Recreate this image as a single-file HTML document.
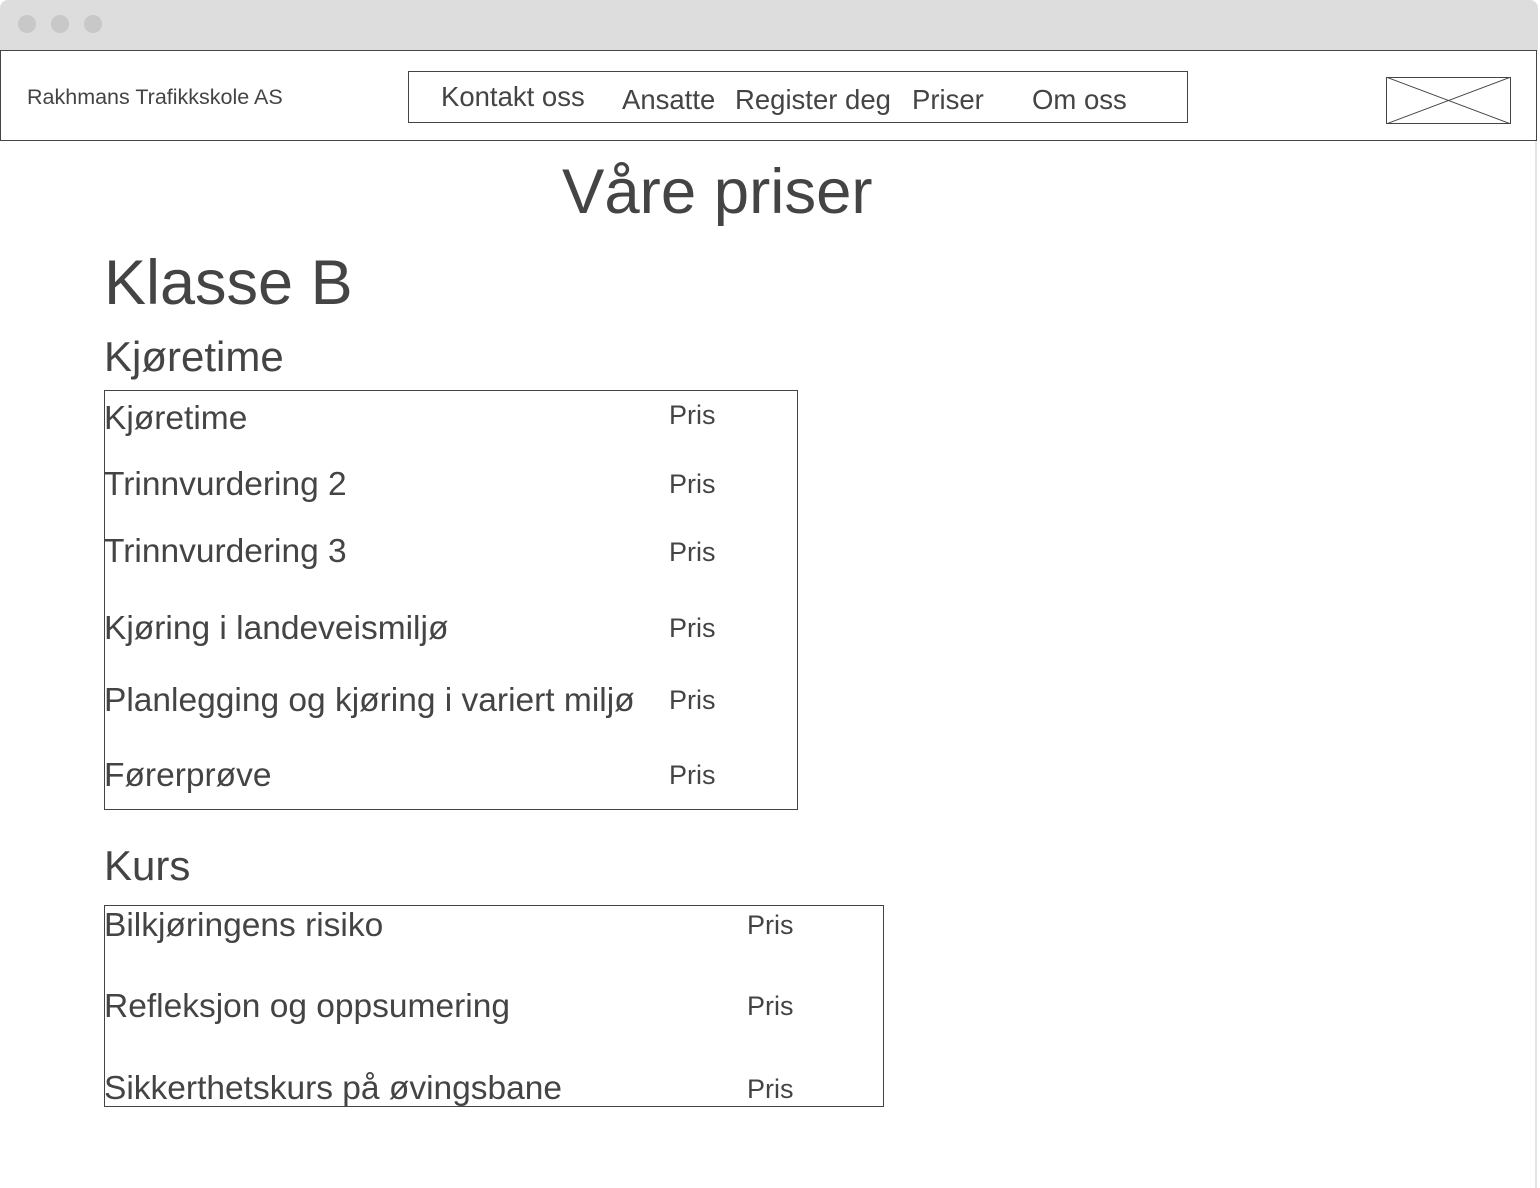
<!DOCTYPE html>
<html><head><meta charset="utf-8"><style>
html,body{margin:0;padding:0;background:#fff;}
body{width:1540px;height:1188px;position:relative;overflow:hidden;font-family:"Liberation Sans",sans-serif;color:#444;}
.t{position:absolute;line-height:1;white-space:nowrap;}
.box{position:absolute;border:1px solid #444;box-sizing:border-box;}
.i{font-size:33.5px;}
.p{font-size:27px;}
.n{font-size:27.5px;}
</style></head><body>
<div style="position:absolute;left:0;top:0;width:1538px;height:51px;background:#ddd;border-radius:8px 8px 0 0;"></div>
<div style="position:absolute;left:18px;top:15px;width:18px;height:18px;border-radius:50%;background:#c8c8c8"></div>
<div style="position:absolute;left:51px;top:15px;width:18px;height:18px;border-radius:50%;background:#c8c8c8"></div>
<div style="position:absolute;left:84px;top:15px;width:18px;height:18px;border-radius:50%;background:#c8c8c8"></div>
<div class="box" style="left:0;top:50px;width:1537px;height:91px;"></div>
<div style="position:absolute;left:1535px;top:141px;width:2px;height:1047px;background:#e4e4e4"></div>
<div class="t" style="left:27px;top:87px;font-size:21.5px;">Rakhmans Trafikkskole AS</div>
<div class="box" style="left:408px;top:71px;width:780px;height:52px;"></div>
<div class="t n" style="left:441px;top:83px;">Kontakt oss</div>
<div class="t n" style="left:622px;top:86px;">Ansatte</div>
<div class="t n" style="left:735px;top:86px;">Register deg</div>
<div class="t n" style="left:912px;top:86px;">Priser</div>
<div class="t n" style="left:1032px;top:86px;">Om oss</div>
<svg style="position:absolute;left:1386px;top:77px" width="125" height="47"><rect x="0.5" y="0.5" width="124" height="46" fill="none" stroke="#444"/><line x1="0" y1="0" x2="125" y2="47" stroke="#444"/><line x1="125" y1="0" x2="0" y2="47" stroke="#444"/></svg>
<div class="t" style="left:562px;top:161px;font-size:63.5px;">Våre priser</div>
<div class="t" style="left:104px;top:252px;font-size:63px;">Klasse B</div>
<div class="t" style="left:104px;top:336px;font-size:42px;">Kjøretime</div>
<div class="box" style="left:104px;top:390px;width:694px;height:420px;"></div>
<div class="t i" style="left:104px;top:402px;">Kjøretime</div>
<div class="t i" style="left:104px;top:468px;">Trinnvurdering 2</div>
<div class="t i" style="left:104px;top:535px;">Trinnvurdering 3</div>
<div class="t i" style="left:104px;top:612px;">Kjøring i landeveismiljø</div>
<div class="t i" style="left:104px;top:684px;">Planlegging og kjøring i variert miljø</div>
<div class="t i" style="left:104px;top:759px;">Førerprøve</div>
<div class="t p" style="left:669px;top:402px;">Pris</div>
<div class="t p" style="left:669px;top:471px;">Pris</div>
<div class="t p" style="left:669px;top:539px;">Pris</div>
<div class="t p" style="left:669px;top:615px;">Pris</div>
<div class="t p" style="left:669px;top:687px;">Pris</div>
<div class="t p" style="left:669px;top:762px;">Pris</div>
<div class="t" style="left:104px;top:845px;font-size:42px;">Kurs</div>
<div class="box" style="left:104px;top:905px;width:780px;height:202px;"></div>
<div class="t i" style="left:104px;top:909px;">Bilkjøringens risiko</div>
<div class="t i" style="left:104px;top:990px;">Refleksjon og oppsumering</div>
<div class="t i" style="left:104px;top:1072px;">Sikkerthetskurs på øvingsbane</div>
<div class="t p" style="left:747px;top:912px;">Pris</div>
<div class="t p" style="left:747px;top:993px;">Pris</div>
<div class="t p" style="left:747px;top:1076px;">Pris</div>
</body></html>
